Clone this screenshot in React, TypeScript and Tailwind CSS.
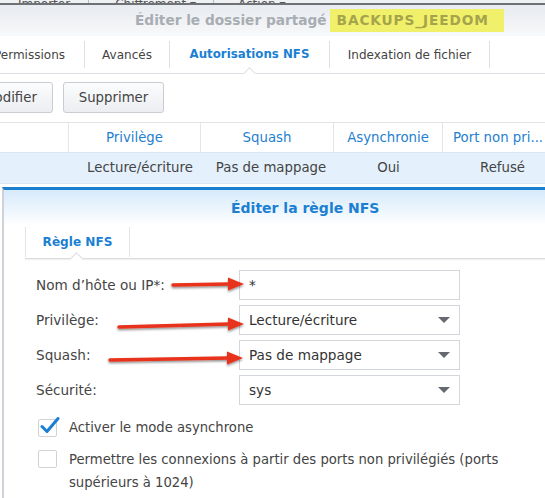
import React from "react";

const Caret = () => (
  <svg width="12" height="6" viewBox="0 0 12 6" className="shrink-0">
    <path d="M0 0 H12 L6 6 Z" fill="#666a70" />
  </svg>
);

const Field = ({ label, value, select }: { label: string; value: string; select?: boolean }) => (
  <div className="flex items-center h-[30px]">
    <div className="w-[203px] shrink-0 text-[#444]">{label}</div>
    <div className="w-[221px] h-[30px] border border-[#d3d7dc] bg-white flex items-center justify-between pl-[9px] pr-[9px] text-[#333]">
      <span>{value}</span>
      {select && <Caret />}
    </div>
  </div>
);

const CheckBox = ({ checked }: { checked?: boolean }) => (
  <div className="relative w-[19px] h-[18px] border border-[#cfd3d8] rounded-[2px] bg-white shrink-0">
    {checked && (
      <svg className="absolute -top-[4px] left-[1px]" width="20" height="19" viewBox="0 0 20 19">
        <path d="M2 10.5 L7 15.5 L18 2.5" fill="none" stroke="#1b7fd3" strokeWidth="3" strokeLinecap="round" strokeLinejoin="round" />
      </svg>
    )}
  </div>
);

const Arrows = () => (
  <svg className="absolute inset-0 pointer-events-none" width="545" height="498" viewBox="0 0 545 498">
    <defs>
      <filter id="sh" x="-10%" y="-50%" width="120%" height="200%">
        <feDropShadow dx="0" dy="1.5" stdDeviation="1.2" floodColor="#000" floodOpacity="0.45" />
      </filter>
    </defs>
    <g filter="url(#sh)" fill="#e8321a" stroke="#e8321a">
      <line x1="173" y1="285" x2="230" y2="284" strokeWidth="3.5" strokeLinecap="round" />
      <path d="M228 277.5 L244 284 L228 290.5 Z" stroke="none" />
      <line x1="119" y1="327" x2="230" y2="324" strokeWidth="3.5" strokeLinecap="round" />
      <path d="M228 317.5 L244 324 L228 330.5 Z" stroke="none" />
      <line x1="110" y1="360" x2="229" y2="358" strokeWidth="3.5" strokeLinecap="round" />
      <path d="M227 351.5 L243 358 L227 364.5 Z" stroke="none" />
    </g>
  </svg>
);

export default function App() {
  return (
    <div className="relative w-[545px] h-[498px] overflow-hidden bg-white font-['DejaVu_Sans',sans-serif] text-[13.3px] text-[#444]">
      {/* window behind, cut at the top */}
      <div className="h-[3px] overflow-hidden bg-[#eef0f2]">
        <div className="flex items-end h-[3px] text-[12px] text-[#555]">
          <span className="ml-[18px] leading-[10px] translate-y-[6px]">Importer</span>
          <span className="ml-[18px] w-px h-[3px] bg-[#bbb]" />
          <span className="ml-[26px] leading-[10px] translate-y-[6px]">Chiffrement ▾</span>
          <span className="ml-[17px] w-px h-[3px] bg-[#bbb]" />
          <span className="ml-[24px] leading-[10px] translate-y-[6px]">Action ▾</span>
        </div>
      </div>
      <div className="h-[2px] bg-[#6e7175]" />

      {/* shared folder window */}
      <div className="h-[31px] bg-gradient-to-b from-[#e8ebef] to-[#f8f9fa] flex items-center pl-[135px] font-bold text-[13.7px] text-[#a8adb4]">
        <span>Éditer le dossier partagé</span>
        <span className="ml-[3px] bg-[#f1f06a] text-[#a5a44c] pl-[7px] pr-[15px] h-[23px] flex items-center tracking-[0.9px]">BACKUPS_JEEDOM</span>
      </div>

      <div className="relative h-[38px] flex items-center border-b border-[#dcdfe3] text-[12px] text-[#444]">
        <div className="w-[85px] shrink-0 h-[27px] border-r border-[#dde0e4] flex items-center justify-end pr-[19px]">Permissions</div>
        <div className="w-[85px] shrink-0 h-[27px] border-r border-[#dde0e4] flex items-center justify-center">Avancés</div>
        <div className="w-[160px] shrink-0 h-[27px] border-r border-[#dde0e4] flex items-center justify-center font-bold text-[11.8px] text-[#1b7fd3]">Autorisations NFS</div>
        <div className="w-[160px] shrink-0 h-[27px] border-r border-[#dde0e4] flex items-center justify-center">Indexation de fichier</div>
        <div className="absolute left-[245px] -bottom-[5px] w-[9px] h-[9px] rotate-45 bg-white border-l border-t border-[#dcdfe3]" />
      </div>

      <div className="flex gap-[10px] mt-[8px] -ml-[33px]">
        <div className="w-[86px] h-[31px] flex items-center justify-center border border-[#c9cdd2] rounded-[3px] bg-gradient-to-b from-[#fbfcfd] to-[#eceef1] text-[#444]">Modifier</div>
        <div className="w-[101px] h-[31px] flex items-center justify-center border border-[#c9cdd2] rounded-[3px] bg-gradient-to-b from-[#fbfcfd] to-[#eceef1] text-[#444]">Supprimer</div>
      </div>

      {/* rules table */}
      <div className="mt-[9px] border-t border-[#e1e4e7]">
        <div className="flex h-[29px] text-[#1f7fd0]">
          <div className="w-[69px] shrink-0 border-r border-[#e4e7ea]" />
          <div className="w-[132px] shrink-0 border-r border-[#e4e7ea] flex items-center justify-center">Privilège</div>
          <div className="w-[133px] shrink-0 border-r border-[#e4e7ea] flex items-center justify-center">Squash</div>
          <div className="w-[109px] shrink-0 border-r border-[#e4e7ea] flex items-center justify-center">Asynchronie</div>
          <div className="flex-1 flex items-center pl-[10px] whitespace-nowrap">Port non pri...</div>
        </div>
        <div className="flex h-[32px] bg-[#e4f1fc] border-y border-[#d9e6f1] text-[#444]">
          <div className="w-[69px] shrink-0" />
          <div className="w-[132px] shrink-0 flex items-center justify-center pl-[10px]">Lecture/écriture</div>
          <div className="w-[133px] shrink-0 flex items-center justify-center pl-[7px]">Pas de mappage</div>
          <div className="w-[109px] shrink-0 flex items-center justify-center">Oui</div>
          <div className="flex-1 flex items-center pl-[37px]">Refusé</div>
        </div>
      </div>

      {/* NFS rule dialog */}
      <div className="mt-[3px] ml-[2px] border-l-2 border-[#cfd2d6] border-t-[3px] border-t-[#1b7fd0] bg-white h-[320px]">
        <div className="h-[36px] bg-gradient-to-b from-[#d6eafb] to-white flex items-center pl-[227px] font-bold text-[14px] text-[#1b7fd3]">
          Éditer la règle NFS
        </div>
        <div className="relative ml-[21px] h-[33px] flex items-center border-b border-[#dadde1] shadow-[0_1px_1px_rgba(0,0,0,0.06)]">
          <div className="w-[105px] h-[30px] border-x border-[#e3e6e9] flex items-center justify-center font-bold text-[12.1px] text-[#1b7fd3]">Règle NFS</div>
          <div className="absolute left-[47px] -bottom-[5px] w-[9px] h-[9px] rotate-45 bg-white border-l border-t border-[#dadde1]" />
        </div>

        <div className="pl-[32px] pt-[11px] flex flex-col gap-[5px] text-[13.6px]">
          <Field label="Nom d’hôte ou IP*:" value="*" />
          <Field label="Privilège:" value="Lecture/écriture" select />
          <Field label="Squash:" value="Pas de mappage" select />
          <Field label="Sécurité:" value="sys" select />
        </div>

        <div className="pl-[34px] pt-[13px] flex flex-col gap-[12px] text-[13.2px] text-[#444]">
          <div className="flex items-center gap-[12px]">
            <CheckBox checked />
            <span>Activer le mode asynchrone</span>
          </div>
          <div className="flex items-start gap-[12px]">
            <CheckBox />
            <span className="leading-[23px] -mt-[2px] w-[450px]">
              Permettre les connexions à partir des ports non privilégiés (ports supérieurs à 1024)
            </span>
          </div>
        </div>
      </div>

      <Arrows />
    </div>
  );
}
